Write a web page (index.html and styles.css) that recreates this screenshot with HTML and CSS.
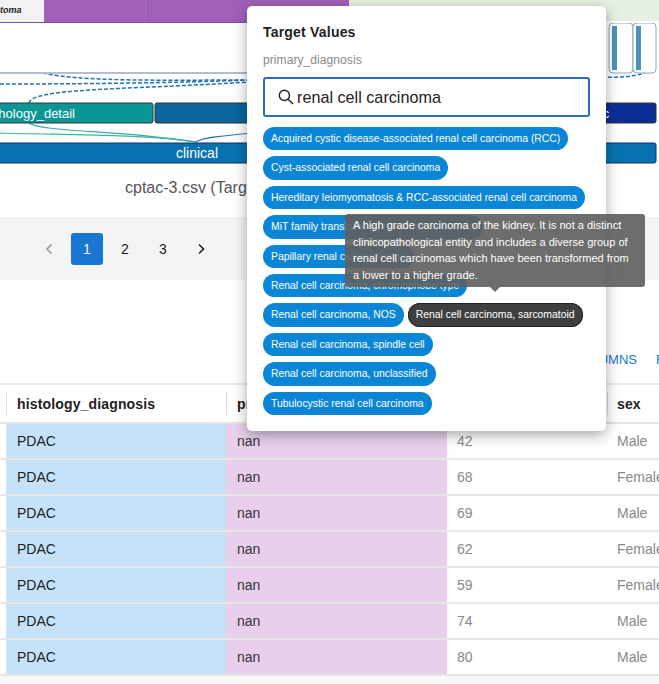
FILE: index.html
```html
<!DOCTYPE html>
<html lang="en">
<head>
    <meta charset="UTF-8">
    <meta name="viewport" content="width=device-width, initial-scale=1.0">
    <title>Target Values</title>
    <link rel="stylesheet" href="styles.css">
</head>
<body>

    <div class="top-strip">
        <div class="strip-cell strip-label"><span>toma</span></div>
        <div class="strip-cell strip-purple"></div>
        <div class="strip-cell strip-purple strip-wide"></div>
        <div class="strip-cell strip-green"></div>
    </div>

    <svg class="sankey" width="659" height="147" viewBox="0 23 659 147">
        <path class="link-dash" d="M43 73 C80 82 170 80 250 80"/>
        <path class="link-dash" d="M0 84 C80 84 170 83 250 80"/>
        <path class="link-dash" d="M29 103 C32 88 120 90 250 82"/>
        <path class="link-dash" d="M608 77 C620 78 635 76 645 73"/>
        <path class="link-teal" d="M29 123 C40 132 120 130 196 142"/>
        <path class="link-green" d="M0 133 C60 135 140 134 196 142"/>
        <path class="link-blue" d="M196 142 C205 136 230 136 250 133"/>
        <rect class="axis-line" x="0" y="72" width="250" height="2"/>

        <rect class="node node-teal" x="-20" y="103" width="173" height="20" rx="2"/>
        <rect class="node node-blue" x="155" y="103" width="200" height="20" rx="2"/>
        <rect class="node node-navy" x="500" y="103" width="156" height="20" rx="2"/>
        <rect class="node node-clinical" x="-20" y="143" width="676" height="20" rx="2"/>
        <text class="node-text" x="75" y="118" text-anchor="end">pathology_detail</text>
        <text class="node-text" x="606" y="118" text-anchor="middle">c</text>
        <text class="node-text node-text-big" x="197" y="158" text-anchor="middle">clinical</text>

        <rect class="mini-box" x="609" y="23" width="24" height="50" rx="4"/>
        <rect class="mini-box" x="633" y="23" width="23" height="50" rx="4"/>
        <rect class="mini-bar" x="612" y="26" width="5" height="44"/>
        <rect class="mini-bar" x="636" y="26" width="5" height="44"/>
    </svg>

    <div class="caption">cptac-3.csv (Target)</div>

    <div class="pager-band">
        <button class="page-btn page-arrow muted" type="button">
            <svg width="10" height="12" viewBox="0 0 10 12"><path d="M7.5 1.5 L3 6 L7.5 10.5"/></svg>
        </button>
        <button class="page-btn current" type="button">1</button>
        <button class="page-btn" type="button">2</button>
        <button class="page-btn" type="button">3</button>
        <button class="page-btn page-arrow" type="button">
            <svg width="10" height="12" viewBox="0 0 10 12"><path d="M3 1.5 L7.5 6 L3 10.5"/></svg>
        </button>
    </div>

    <div class="toolbar">
        <span class="tool-link">COLUMNS</span>
        <span class="tool-link">FILTERS</span>
    </div>

    <div class="table-wrap">
        <table class="data-table">
            <thead>
                <tr>
                    <th class="col-gap"></th>
                    <th class="col-hist">histology_diagnosis</th>
                    <th class="col-prim">primary_diagnosis</th>
                    <th class="col-age">age</th>
                    <th class="col-sex">sex</th>
                </tr>
            </thead>
            <tbody>
                <tr><td class="cell-gap"></td><td class="cell-blue">PDAC</td><td class="cell-purple">nan</td><td class="cell-gray">42</td><td class="cell-gray">Male</td></tr>
                <tr><td class="cell-gap"></td><td class="cell-blue">PDAC</td><td class="cell-purple">nan</td><td class="cell-gray">68</td><td class="cell-gray">Female</td></tr>
                <tr><td class="cell-gap"></td><td class="cell-blue">PDAC</td><td class="cell-purple">nan</td><td class="cell-gray">69</td><td class="cell-gray">Male</td></tr>
                <tr><td class="cell-gap"></td><td class="cell-blue">PDAC</td><td class="cell-purple">nan</td><td class="cell-gray">62</td><td class="cell-gray">Female</td></tr>
                <tr><td class="cell-gap"></td><td class="cell-blue">PDAC</td><td class="cell-purple">nan</td><td class="cell-gray">59</td><td class="cell-gray">Female</td></tr>
                <tr><td class="cell-gap"></td><td class="cell-blue">PDAC</td><td class="cell-purple">nan</td><td class="cell-gray">74</td><td class="cell-gray">Male</td></tr>
                <tr><td class="cell-gap"></td><td class="cell-blue">PDAC</td><td class="cell-purple">nan</td><td class="cell-gray">80</td><td class="cell-gray">Male</td></tr>
            </tbody>
        </table>
    </div>

    <div class="popover">
        <h3 class="pop-title">Target Values</h3>
        <div class="pop-sub">primary_diagnosis</div>
        <div class="search-box">
            <svg class="search-icon" width="16" height="16" viewBox="0 0 18 18">
                <circle cx="7.2" cy="7.2" r="5.7"/>
                <path d="M11.4 11.4 L17 17"/>
            </svg>
            <span>renal cell carcinoma</span>
        </div>
        <div class="chips">
            <span class="chip">Acquired cystic disease-associated renal cell carcinoma (RCC)</span>
            <span class="chip">Cyst-associated renal cell carcinoma</span>
            <span class="chip">Hereditary leiomyomatosis &amp; RCC-associated renal cell carcinoma</span>
            <span class="chip">MiT family translocation renal cell carcinoma</span>
            <span class="chip">Papillary renal cell carcinoma</span>
            <span class="chip">Renal cell carcinoma, chromophobe type</span>
            <span class="chip">Renal cell carcinoma, NOS</span>
            <span class="chip chip-hover">Renal cell carcinoma, sarcomatoid</span>
            <span class="chip">Renal cell carcinoma, spindle cell</span>
            <span class="chip">Renal cell carcinoma, unclassified</span>
            <span class="chip">Tubulocystic renal cell carcinoma</span>
        </div>
    </div>

    <div class="tooltip">A high grade carcinoma of the kidney. It is not a distinct clinicopathological entity and includes a diverse group of renal cell carcinomas which have been transformed from a lower to a higher grade.</div>

</body>
</html>
```

FILE: styles.css
```css
html, body {
    margin: 0;
    padding: 0;
}

body {
    width: 659px;
    height: 684px;
    overflow: hidden;
    position: relative;
    background-color: #fff;
    font-family: "Liberation Sans", Arial, sans-serif;
    color: #222;
}

/* Top strip */
.top-strip {
    display: flex;
    height: 23px;
}

.strip-cell {
    box-sizing: border-box;
    height: 23px;
}

.strip-label {
    width: 44px;
    background-color: #f3f3f3;
    border-bottom: 1px solid #6f56b4;
    font-size: 9px;
    font-weight: bold;
    font-style: italic;
    line-height: 20px;
    color: #222;
}

.strip-purple {
    width: 102px;
    background-color: #a05fb9;
    border-bottom: 1px solid #6f56b4;
    border-right: 1px solid #a972c0;
}

.strip-wide {
    width: 203px;
    border-right: 0;
}

.strip-green {
    flex: 1;
    height: 21px;
    background-color: #e6f1e3;
}

/* Sankey */
.sankey {
    display: block;
}

.link-dash {
    fill: none;
    stroke: #1f72b4;
    stroke-width: 1.5;
    stroke-dasharray: 4 2;
}

.link-teal {
    fill: none;
    stroke: #3aa9a6;
    stroke-width: 1.2;
}

.link-green {
    fill: none;
    stroke: #39b59a;
    stroke-width: 1.2;
}

.link-blue {
    fill: none;
    stroke: #2a6fb5;
    stroke-width: 1.2;
}

.axis-line {
    fill: #b1bed0;
}

.node {
    stroke: #333;
    stroke-width: 1;
}

.node-teal {
    fill: #0b9696;
}

.node-blue {
    fill: #0a669c;
}

.node-navy {
    fill: #0a2f96;
}

.node-clinical {
    fill: #0872b0;
    stroke: #12306e;
}

.node-text {
    fill: #fff;
    font-size: 13px;
}

.node-text-big {
    font-size: 14px;
}

.mini-box {
    fill: #fff;
    stroke: #8fa6c4;
    stroke-width: 1;
}

.mini-bar {
    fill: #4f93bb;
}

.caption {
    height: 47px;
    padding-left: 125px;
    font-size: 16px;
    line-height: 35px;
    color: #555;
}

/* Pagination */
.pager-band {
    display: flex;
    align-items: center;
    gap: 6px;
    box-sizing: border-box;
    height: 63px;
    padding-left: 33px;
    background-color: #f4f4f4;
}

.page-btn {
    width: 32px;
    height: 32px;
    padding: 0;
    border: 0;
    border-radius: 3px;
    background: none;
    font-family: inherit;
    font-size: 14px;
    color: #222;
}

.page-btn.current {
    background-color: #1976d2;
    color: #fff;
}

.page-arrow svg {
    display: block;
    margin: 0 auto;
    fill: none;
    stroke: #222;
    stroke-width: 1.6;
}

.page-arrow.muted svg {
    stroke: #9a9a9a;
}

/* Toolbar above the table */
.toolbar {
    display: flex;
    gap: 19px;
    box-sizing: border-box;
    width: 659px;
    height: 103px;
    padding: 72px 0 0 572px;
    overflow: hidden;
    white-space: nowrap;
    font-size: 13px;
    line-height: 16px;
    color: #1976d2;
}

/* Table */
.table-wrap {
    width: 659px;
    overflow: hidden;
    background-color: #f8f8f8;
    height: 301px;
}

.data-table {
    table-layout: fixed;
    width: 720px;
    border-collapse: collapse;
    background-color: #fff;
    font-size: 14px;
}

.col-gap { width: 6px; }
.col-hist { width: 220px; }
.col-prim { width: 221px; }
.col-age { width: 160px; }
.col-sex { width: 113px; }

.data-table th {
    box-sizing: border-box;
    height: 39px;
    padding: 0 10px;
    border-top: 2px solid #ececec;
    border-bottom: 2px solid #e4e4e4;
    text-align: left;
    font-weight: bold;
    letter-spacing: 0.15px;
    white-space: nowrap;
    overflow: hidden;
    background-image: linear-gradient(#ddd, #ddd);
    background-repeat: no-repeat;
    background-size: 1px 23px;
    background-position: left center;
}

.data-table th.col-hist,
.data-table th.col-prim {
    padding-left: 11px;
}

.data-table th.col-gap,
.data-table td.cell-gap {
    padding: 0;
}

.data-table th.col-gap {
    background-image: none;
}

.data-table td {
    box-sizing: border-box;
    height: 36px;
    padding: 0 10px;
    border-bottom: 2px solid #e6e6e6;
    white-space: nowrap;
    overflow: hidden;
}

.data-table td.cell-blue {
    padding-left: 11px;
    background-color: #c6e2f9;
    color: #222;
}

.data-table td.cell-purple {
    padding-left: 11px;
    background-color: #e8d0ec;
    color: #333;
}

.cell-gray {
    color: #888;
}

/* Popover */
.popover {
    position: absolute;
    left: 247px;
    top: 6px;
    box-sizing: border-box;
    width: 359px;
    height: 425px;
    padding: 18px 16px 0;
    border-radius: 5px;
    background-color: #fff;
    box-shadow: 0 4px 14px rgba(0, 0, 0, 0.35);
}

.pop-title {
    margin: 0;
    font-size: 14px;
    line-height: 16px;
    font-weight: bold;
    letter-spacing: 0.2px;
    color: #222;
}

.pop-sub {
    margin-top: 13px;
    font-size: 12px;
    line-height: 14px;
    letter-spacing: 0.08px;
    color: #888;
}

.search-box {
    display: flex;
    align-items: center;
    gap: 3px;
    box-sizing: border-box;
    width: 327px;
    height: 40px;
    margin-top: 10px;
    padding-left: 13px;
    border: 2px solid #2a6ccc;
    border-radius: 3px;
    font-size: 16.2px;
    color: #222;
}

.search-icon {
    flex: none;
    fill: none;
    stroke: #222;
    stroke-width: 1.6;
}

.chips {
    display: flex;
    flex-wrap: wrap;
    align-items: flex-start;
    gap: 6px 4px;
    margin-top: 10px;
}

.chip {
    box-sizing: border-box;
    height: 23.4px;
    padding: 0 8px;
    border-radius: 12px;
    background-color: #0b86d6;
    color: #fff;
    font-size: 10.4px;
    line-height: 23px;
    white-space: nowrap;
}

.chip-hover {
    background-color: #3f3f3f;
    box-shadow: inset 0 0 0 1px #222;
}

/* Tooltip over the chips */
.tooltip {
    position: absolute;
    left: 345px;
    top: 214px;
    box-sizing: border-box;
    width: 300px;
    height: 73px;
    padding: 3px 12px 3px 8px;
    border-radius: 3px;
    background-color: rgba(97, 97, 97, 0.92);
    color: #fff;
    font-size: 11px;
    line-height: 16.5px;
}

.tooltip::after {
    content: "";
    position: absolute;
    left: 145px;
    bottom: -5px;
    border-left: 5px solid transparent;
    border-right: 5px solid transparent;
    border-top: 5px solid rgba(97, 97, 97, 0.92);
}
```
